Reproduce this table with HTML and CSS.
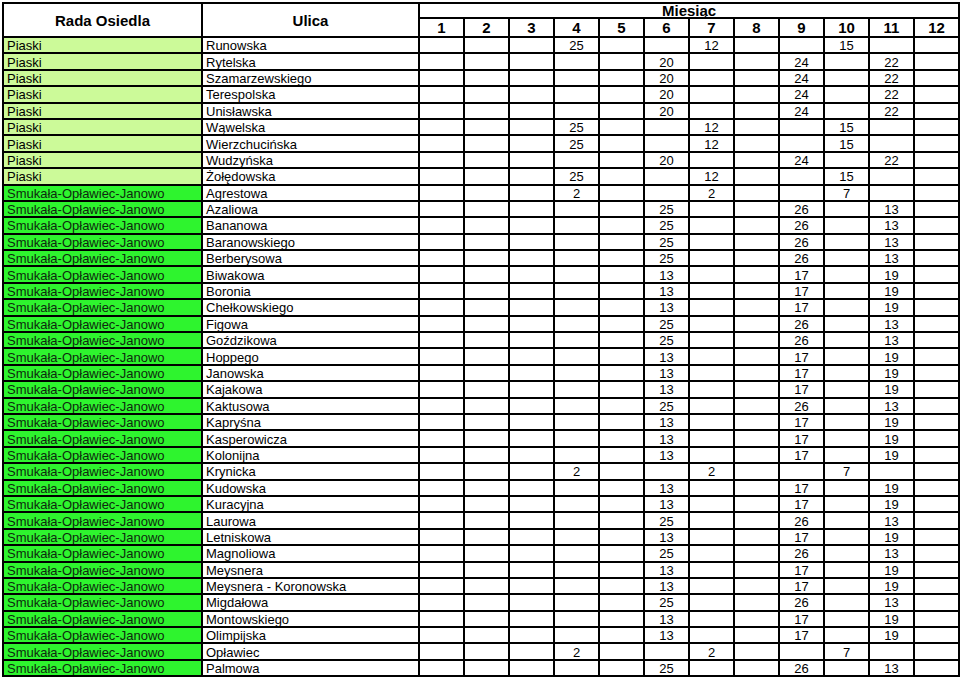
FILE: index.html
```html
<!DOCTYPE html>
<html lang="pl">
<head>
<meta charset="utf-8">
<title>Harmonogram</title>
<link rel="stylesheet" href="styles.css">
</head>
<body>
<table class="sched">
<colgroup>
<col class="c-rada"><col class="c-ulica">
<col class="c-m"><col class="c-m"><col class="c-m"><col class="c-m"><col class="c-m"><col class="c-m"><col class="c-m"><col class="c-m"><col class="c-m"><col class="c-m"><col class="c-m"><col class="c-m">
</colgroup>
<thead>
<tr class="h1"><th rowspan="2" class="hmain">Rada Osiedla</th><th rowspan="2" class="hmain">Ulica</th><th colspan="12" class="hmonth">Miesiąc</th></tr>
<tr class="h2"><th>1</th><th>2</th><th>3</th><th>4</th><th>5</th><th>6</th><th>7</th><th>8</th><th>9</th><th>10</th><th>11</th><th>12</th></tr>
</thead>
<tbody>
<tr class="pia"><td class="rada">Piaski</td><td class="ul">Runowska</td><td></td><td></td><td></td><td>25</td><td></td><td></td><td>12</td><td></td><td></td><td>15</td><td></td><td></td></tr>
<tr class="pia"><td class="rada">Piaski</td><td class="ul">Rytelska</td><td></td><td></td><td></td><td></td><td></td><td>20</td><td></td><td></td><td>24</td><td></td><td>22</td><td></td></tr>
<tr class="pia"><td class="rada">Piaski</td><td class="ul">Szamarzewskiego</td><td></td><td></td><td></td><td></td><td></td><td>20</td><td></td><td></td><td>24</td><td></td><td>22</td><td></td></tr>
<tr class="pia"><td class="rada">Piaski</td><td class="ul">Terespolska</td><td></td><td></td><td></td><td></td><td></td><td>20</td><td></td><td></td><td>24</td><td></td><td>22</td><td></td></tr>
<tr class="pia"><td class="rada">Piaski</td><td class="ul">Unisławska</td><td></td><td></td><td></td><td></td><td></td><td>20</td><td></td><td></td><td>24</td><td></td><td>22</td><td></td></tr>
<tr class="pia"><td class="rada">Piaski</td><td class="ul">Wąwelska</td><td></td><td></td><td></td><td>25</td><td></td><td></td><td>12</td><td></td><td></td><td>15</td><td></td><td></td></tr>
<tr class="pia"><td class="rada">Piaski</td><td class="ul">Wierzchucińska</td><td></td><td></td><td></td><td>25</td><td></td><td></td><td>12</td><td></td><td></td><td>15</td><td></td><td></td></tr>
<tr class="pia"><td class="rada">Piaski</td><td class="ul">Wudzyńska</td><td></td><td></td><td></td><td></td><td></td><td>20</td><td></td><td></td><td>24</td><td></td><td>22</td><td></td></tr>
<tr class="pia"><td class="rada">Piaski</td><td class="ul">Żołędowska</td><td></td><td></td><td></td><td>25</td><td></td><td></td><td>12</td><td></td><td></td><td>15</td><td></td><td></td></tr>
<tr class="smu"><td class="rada">Smukała-Opławiec-Janowo</td><td class="ul">Agrestowa</td><td></td><td></td><td></td><td>2</td><td></td><td></td><td>2</td><td></td><td></td><td>7</td><td></td><td></td></tr>
<tr class="smu"><td class="rada">Smukała-Opławiec-Janowo</td><td class="ul">Azaliowa</td><td></td><td></td><td></td><td></td><td></td><td>25</td><td></td><td></td><td>26</td><td></td><td>13</td><td></td></tr>
<tr class="smu"><td class="rada">Smukała-Opławiec-Janowo</td><td class="ul">Bananowa</td><td></td><td></td><td></td><td></td><td></td><td>25</td><td></td><td></td><td>26</td><td></td><td>13</td><td></td></tr>
<tr class="smu"><td class="rada">Smukała-Opławiec-Janowo</td><td class="ul">Baranowskiego</td><td></td><td></td><td></td><td></td><td></td><td>25</td><td></td><td></td><td>26</td><td></td><td>13</td><td></td></tr>
<tr class="smu"><td class="rada">Smukała-Opławiec-Janowo</td><td class="ul">Berberysowa</td><td></td><td></td><td></td><td></td><td></td><td>25</td><td></td><td></td><td>26</td><td></td><td>13</td><td></td></tr>
<tr class="smu"><td class="rada">Smukała-Opławiec-Janowo</td><td class="ul">Biwakowa</td><td></td><td></td><td></td><td></td><td></td><td>13</td><td></td><td></td><td>17</td><td></td><td>19</td><td></td></tr>
<tr class="smu"><td class="rada">Smukała-Opławiec-Janowo</td><td class="ul">Boronia</td><td></td><td></td><td></td><td></td><td></td><td>13</td><td></td><td></td><td>17</td><td></td><td>19</td><td></td></tr>
<tr class="smu"><td class="rada">Smukała-Opławiec-Janowo</td><td class="ul">Chełkowskiego</td><td></td><td></td><td></td><td></td><td></td><td>13</td><td></td><td></td><td>17</td><td></td><td>19</td><td></td></tr>
<tr class="smu"><td class="rada">Smukała-Opławiec-Janowo</td><td class="ul">Figowa</td><td></td><td></td><td></td><td></td><td></td><td>25</td><td></td><td></td><td>26</td><td></td><td>13</td><td></td></tr>
<tr class="smu"><td class="rada">Smukała-Opławiec-Janowo</td><td class="ul">Goździkowa</td><td></td><td></td><td></td><td></td><td></td><td>25</td><td></td><td></td><td>26</td><td></td><td>13</td><td></td></tr>
<tr class="smu"><td class="rada">Smukała-Opławiec-Janowo</td><td class="ul">Hoppego</td><td></td><td></td><td></td><td></td><td></td><td>13</td><td></td><td></td><td>17</td><td></td><td>19</td><td></td></tr>
<tr class="smu"><td class="rada">Smukała-Opławiec-Janowo</td><td class="ul">Janowska</td><td></td><td></td><td></td><td></td><td></td><td>13</td><td></td><td></td><td>17</td><td></td><td>19</td><td></td></tr>
<tr class="smu"><td class="rada">Smukała-Opławiec-Janowo</td><td class="ul">Kajakowa</td><td></td><td></td><td></td><td></td><td></td><td>13</td><td></td><td></td><td>17</td><td></td><td>19</td><td></td></tr>
<tr class="smu"><td class="rada">Smukała-Opławiec-Janowo</td><td class="ul">Kaktusowa</td><td></td><td></td><td></td><td></td><td></td><td>25</td><td></td><td></td><td>26</td><td></td><td>13</td><td></td></tr>
<tr class="smu"><td class="rada">Smukała-Opławiec-Janowo</td><td class="ul">Kapryśna</td><td></td><td></td><td></td><td></td><td></td><td>13</td><td></td><td></td><td>17</td><td></td><td>19</td><td></td></tr>
<tr class="smu"><td class="rada">Smukała-Opławiec-Janowo</td><td class="ul">Kasperowicza</td><td></td><td></td><td></td><td></td><td></td><td>13</td><td></td><td></td><td>17</td><td></td><td>19</td><td></td></tr>
<tr class="smu"><td class="rada">Smukała-Opławiec-Janowo</td><td class="ul">Kolonijna</td><td></td><td></td><td></td><td></td><td></td><td>13</td><td></td><td></td><td>17</td><td></td><td>19</td><td></td></tr>
<tr class="smu"><td class="rada">Smukała-Opławiec-Janowo</td><td class="ul">Krynicka</td><td></td><td></td><td></td><td>2</td><td></td><td></td><td>2</td><td></td><td></td><td>7</td><td></td><td></td></tr>
<tr class="smu"><td class="rada">Smukała-Opławiec-Janowo</td><td class="ul">Kudowska</td><td></td><td></td><td></td><td></td><td></td><td>13</td><td></td><td></td><td>17</td><td></td><td>19</td><td></td></tr>
<tr class="smu"><td class="rada">Smukała-Opławiec-Janowo</td><td class="ul">Kuracyjna</td><td></td><td></td><td></td><td></td><td></td><td>13</td><td></td><td></td><td>17</td><td></td><td>19</td><td></td></tr>
<tr class="smu"><td class="rada">Smukała-Opławiec-Janowo</td><td class="ul">Laurowa</td><td></td><td></td><td></td><td></td><td></td><td>25</td><td></td><td></td><td>26</td><td></td><td>13</td><td></td></tr>
<tr class="smu"><td class="rada">Smukała-Opławiec-Janowo</td><td class="ul">Letniskowa</td><td></td><td></td><td></td><td></td><td></td><td>13</td><td></td><td></td><td>17</td><td></td><td>19</td><td></td></tr>
<tr class="smu"><td class="rada">Smukała-Opławiec-Janowo</td><td class="ul">Magnoliowa</td><td></td><td></td><td></td><td></td><td></td><td>25</td><td></td><td></td><td>26</td><td></td><td>13</td><td></td></tr>
<tr class="smu"><td class="rada">Smukała-Opławiec-Janowo</td><td class="ul">Meysnera</td><td></td><td></td><td></td><td></td><td></td><td>13</td><td></td><td></td><td>17</td><td></td><td>19</td><td></td></tr>
<tr class="smu"><td class="rada">Smukała-Opławiec-Janowo</td><td class="ul">Meysnera - Koronowska</td><td></td><td></td><td></td><td></td><td></td><td>13</td><td></td><td></td><td>17</td><td></td><td>19</td><td></td></tr>
<tr class="smu"><td class="rada">Smukała-Opławiec-Janowo</td><td class="ul">Migdałowa</td><td></td><td></td><td></td><td></td><td></td><td>25</td><td></td><td></td><td>26</td><td></td><td>13</td><td></td></tr>
<tr class="smu"><td class="rada">Smukała-Opławiec-Janowo</td><td class="ul">Montowskiego</td><td></td><td></td><td></td><td></td><td></td><td>13</td><td></td><td></td><td>17</td><td></td><td>19</td><td></td></tr>
<tr class="smu"><td class="rada">Smukała-Opławiec-Janowo</td><td class="ul">Olimpijska</td><td></td><td></td><td></td><td></td><td></td><td>13</td><td></td><td></td><td>17</td><td></td><td>19</td><td></td></tr>
<tr class="smu"><td class="rada">Smukała-Opławiec-Janowo</td><td class="ul">Opławiec</td><td></td><td></td><td></td><td>2</td><td></td><td></td><td>2</td><td></td><td></td><td>7</td><td></td><td></td></tr>
<tr class="smu"><td class="rada">Smukała-Opławiec-Janowo</td><td class="ul">Palmowa</td><td></td><td></td><td></td><td></td><td></td><td>25</td><td></td><td></td><td>26</td><td></td><td>13</td><td></td></tr>
</tbody>
</table>
</body>
</html>
```
FILE: styles.css
```css
html, body {
  background: #ffffff;
}
body {
  margin: 2px 0 0 2px;
  font-family: "Liberation Sans", Arial, sans-serif;
  color: #000;
}
.sched {
  border-collapse: collapse;
  table-layout: fixed;
  width: 956px;
}
.c-rada { width: 199px; }
.c-ulica { width: 217px; }
.c-m { width: 45px; }
.sched th,
.sched td {
  border: 2px solid #000;
  padding: 0;
  overflow: hidden;
  white-space: nowrap;
}
.sched th {
  font-weight: bold;
  font-size: 15px;
  line-height: 13px;
  text-align: center;
  vertical-align: middle;
}
.h1 { height: 15px; }
.h2 { height: 19px; }
.hmain { padding-top: 1px; }
.hmonth { line-height: 12px; padding-top: 1px; }
.sched tbody tr { height: 16.4px; }
.sched td {
  font-size: 13px;
  line-height: 13px;
  text-align: center;
  vertical-align: middle;
  padding-top: 1px;
}
.sched td.rada,
.sched td.ul {
  text-align: left;
  padding-left: 3px;
}
.pia .rada { background: #ccfa99; }
.smu .rada { background: #2ef42e; color: #0e2a0e; }
```
